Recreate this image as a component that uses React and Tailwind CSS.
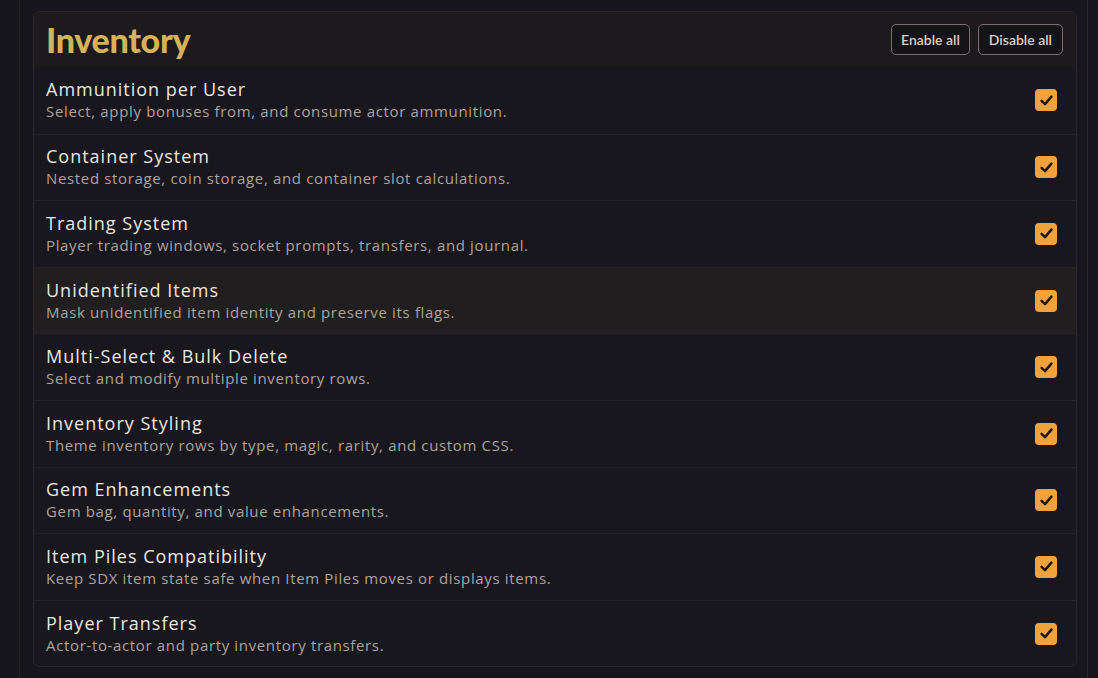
import React from "react";

const features = [
  { title: "Ammunition per User", desc: "Select, apply bonuses from, and consume actor ammunition." },
  { title: "Container System", desc: "Nested storage, coin storage, and container slot calculations." },
  { title: "Trading System", desc: "Player trading windows, socket prompts, transfers, and journal." },
  { title: "Unidentified Items", desc: "Mask unidentified item identity and preserve its flags.", hover: true },
  { title: "Multi-Select & Bulk Delete", desc: "Select and modify multiple inventory rows." },
  { title: "Inventory Styling", desc: "Theme inventory rows by type, magic, rarity, and custom CSS." },
  { title: "Gem Enhancements", desc: "Gem bag, quantity, and value enhancements." },
  { title: "Item Piles Compatibility", desc: "Keep SDX item state safe when Item Piles moves or displays items." },
  { title: "Player Transfers", desc: "Actor-to-actor and party inventory transfers." },
];

function Check() {
  return (
    <span className="flex h-[22px] w-[22px] items-center justify-center rounded-[4px] bg-[#f0a23c]">
      <svg width="15" height="15" viewBox="0 0 14 14" fill="none">
        <path d="M2.4 7.4 L5.6 10.4 L11.6 3.4" stroke="#1c1712" strokeWidth="2.3" strokeLinecap="round" strokeLinejoin="round" />
      </svg>
    </span>
  );
}

export default function App() {
  return (
    <div className="h-[678px] w-[1098px] overflow-hidden bg-[#17161d]">
      <div className="ml-[19px] h-full w-[1069px] border-x border-[#2a2422] pl-[13px] pr-[10px] pt-[11px]">
        <div className="overflow-hidden rounded-[7px] border border-[#2b2627] bg-[#18171e]">
          <div className="flex h-[55px] items-center justify-between bg-[#1c1a1c] pl-[12px] pr-[13px]">
            <h1 className="font-['Lato',sans-serif] text-[34px] font-black leading-none tracking-[-0.3px] text-[#d4b25c]">
              Inventory
            </h1>
            <div className="flex gap-[8px]">
              <button className="h-[31px] rounded-[5px] border border-[#7a6e68] bg-[#141318] px-[9px] font-['Lato',sans-serif] text-[14px] font-semibold text-[#d9cfc2]">
                Enable all
              </button>
              <button className="h-[31px] rounded-[5px] border border-[#7a6e68] bg-[#141318] px-[10px] font-['Lato',sans-serif] text-[14px] font-semibold text-[#d9cfc2]">
                Disable all
              </button>
            </div>
          </div>
          {features.map((f, i) => (
            <div
              key={f.title}
              className={`flex h-[66.6px] items-center justify-between pl-[12px] pr-[19px] ${i > 0 ? "border-t border-[#24212a]" : ""} ${f.hover ? "bg-[#211e1f]" : ""}`}
            >
              <div className="flex flex-col font-['Open_Sans',sans-serif]">
                <span className="text-[18px] font-medium leading-[22px] tracking-[1px] text-[#ece6de]">{f.title}</span>
                <span className="text-[15px] leading-[22px] tracking-[0.65px] text-[#aaa39c]">{f.desc}</span>
              </div>
              <Check />
            </div>
          ))}
        </div>
      </div>
    </div>
  );
}
